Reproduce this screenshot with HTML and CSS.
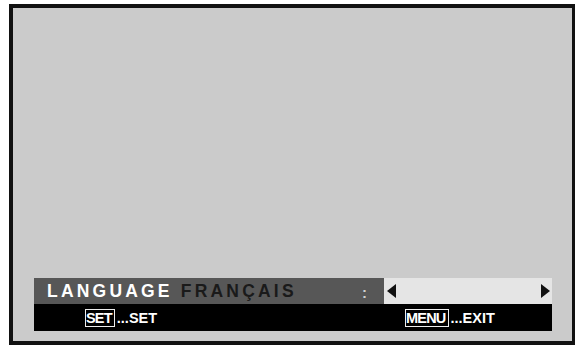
FILE: index.html
```html
<!DOCTYPE html>
<html lang="en">
<head>
    <meta charset="UTF-8">
    <title>Language Menu</title>
    <link rel="stylesheet" href="styles.css">
</head>
<body>
    <div class="screen">
        <div class="menu">
            <div class="menu-row">
                <div class="item">
                    <span class="label">LANGUAGE</span>
                    <span class="value">FRANÇAIS</span>
                    <span class="colon">:</span>
                </div>
                <div class="selector">
                    <span class="arrow arrow-left"></span>
                    <span class="arrow arrow-right"></span>
                </div>
            </div>
            <div class="help-row">
                <div class="help help-set"><span class="key">SET</span>...SET</div>
                <div class="help help-exit"><span class="key">MENU</span>...EXIT</div>
            </div>
        </div>
    </div>
</body>
</html>
```

FILE: styles.css
```css
body {
    margin: 0;
    background: #fff;
    font-family: "Liberation Sans", Arial, sans-serif;
}
.screen {
    margin: 4px 0 0 9px;
    width: 566px;
    height: 341px;
    box-sizing: border-box;
    border: 4px solid #111;
    border-right-width: 3px;
    background-color: #cbcbcb;
    padding: 270px 0 0 21px;
}
.menu {
    width: 518px;
}
.menu-row {
    display: flex;
    height: 26px;
}
.item {
    width: 350px;
    background-color: #575757;
    display: flex;
    align-items: center;
    padding-left: 13px;
    box-sizing: border-box;
    font-size: 17.5px;
    font-weight: bold;
    letter-spacing: 3.2px;
}
.label {
    color: #fff;
    margin-right: 8px;
}
.value {
    color: #1a1a1a;
}
.colon {
    color: #d0d0d0;
    font-size: 15px;
    letter-spacing: 0;
    margin-left: auto;
    margin-right: 17px;
    padding-top: 3px;
}
.selector {
    flex: 1;
    background-color: #e5e5e5;
    display: flex;
    align-items: center;
    justify-content: space-between;
    padding: 0 2px 0 3px;
}
.arrow {
    width: 0;
    height: 0;
    border-top: 7px solid transparent;
    border-bottom: 7px solid transparent;
}
.arrow-left {
    border-right: 9px solid #111;
}
.arrow-right {
    border-left: 9px solid #111;
}
.help-row {
    display: flex;
    height: 27px;
    background-color: #000;
    color: #fff;
    font-size: 14.5px;
    font-weight: bold;
    align-items: center;
}
.help {
    display: flex;
    align-items: center;
}
.help-set {
    margin-left: 51px;
    width: 320px;
}
.key {
    border: 1px solid #eee;
    padding: 1px 2px 0 0;
    margin-right: 2px;
    letter-spacing: -0.8px;
    line-height: 15px;
}
```
